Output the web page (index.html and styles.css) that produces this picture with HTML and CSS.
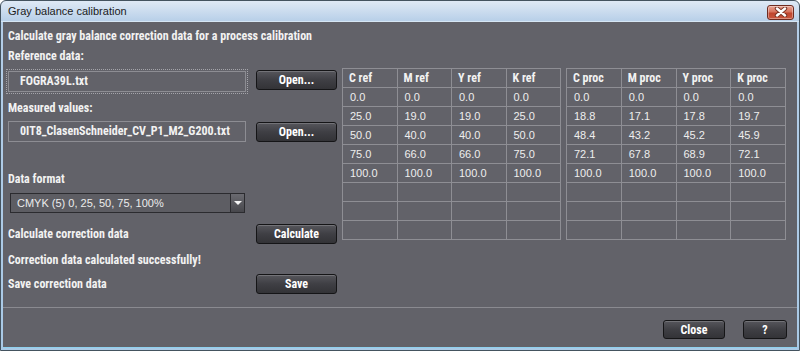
FILE: index.html
```html
<!DOCTYPE html>
<html lang="en">
<head>
  <meta charset="UTF-8" />
  <title>Gray balance calibration</title>
  <link rel="stylesheet" href="styles.css">
</head>
<body>
  <div class="window">
    <div class="titlebar">
      <span class="title">Gray balance calibration</span>
      <button class="close-x" title="Close">
        <svg width="14" height="10" viewBox="0 0 14 10">
          <path d="M3 1.5 L11 8.5 M11 1.5 L3 8.5" stroke="#7a3426" stroke-width="4.4" stroke-linecap="round"/>
          <path d="M3 1.5 L11 8.5 M11 1.5 L3 8.5" stroke="#ffffff" stroke-width="2.4" stroke-linecap="round"/>
        </svg>
      </button>
    </div>

    <div class="client">
      <div class="content">
        <div class="left">
          <p class="intro">Calculate gray balance correction data for a process calibration</p>
          <p class="label label-ref">Reference data:</p>
          <div class="file-row row-ref">
            <div class="field focused">FOGRA39L.txt</div>
            <button class="btn btn-open">Open...</button>
          </div>
          <p class="label label-meas">Measured values:</p>
          <div class="file-row row-meas">
            <div class="field">0IT8_ClasenSchneider_CV_P1_M2_G200.txt</div>
            <button class="btn btn-open">Open...</button>
          </div>
          <p class="label label-format">Data format</p>
          <div class="select">
            <span class="select-text">CMYK (5) 0, 25, 50, 75, 100%</span>
            <span class="select-arrow"></span>
          </div>
          <div class="action-row row-calc">
            <span>Calculate correction data</span>
            <button class="btn btn-action">Calculate</button>
          </div>
          <p class="label status">Correction data calculated successfully!</p>
          <div class="action-row row-save">
            <span>Save correction data</span>
            <button class="btn btn-action">Save</button>
          </div>
        </div>

        <div class="tables">
          <table class="grid grid-ref">
            <tr><th>C ref</th><th>M ref</th><th>Y ref</th><th>K ref</th></tr>
            <tr><td>0.0</td><td>0.0</td><td>0.0</td><td>0.0</td></tr>
            <tr><td>25.0</td><td>19.0</td><td>19.0</td><td>25.0</td></tr>
            <tr><td>50.0</td><td>40.0</td><td>40.0</td><td>50.0</td></tr>
            <tr><td>75.0</td><td>66.0</td><td>66.0</td><td>75.0</td></tr>
            <tr><td>100.0</td><td>100.0</td><td>100.0</td><td>100.0</td></tr>
            <tr><td></td><td></td><td></td><td></td></tr>
            <tr><td></td><td></td><td></td><td></td></tr>
            <tr><td></td><td></td><td></td><td></td></tr>
          </table>
          <table class="grid grid-proc">
            <tr><th>C proc</th><th>M proc</th><th>Y proc</th><th>K proc</th></tr>
            <tr><td>0.0</td><td>0.0</td><td>0.0</td><td>0.0</td></tr>
            <tr><td>18.8</td><td>17.1</td><td>17.8</td><td>19.7</td></tr>
            <tr><td>48.4</td><td>43.2</td><td>45.2</td><td>45.9</td></tr>
            <tr><td>72.1</td><td>67.8</td><td>68.9</td><td>72.1</td></tr>
            <tr><td>100.0</td><td>100.0</td><td>100.0</td><td>100.0</td></tr>
            <tr><td></td><td></td><td></td><td></td></tr>
            <tr><td></td><td></td><td></td><td></td></tr>
            <tr><td></td><td></td><td></td><td></td></tr>
          </table>
        </div>
      </div>

      <div class="footer">
        <button class="btn btn-close">Close</button>
        <button class="btn btn-help">?</button>
      </div>
    </div>
  </div>
</body>
</html>
```

FILE: styles.css
```css
* {
  margin: 0;
  padding: 0;
  box-sizing: border-box;
}

html, body {
  width: 800px;
  height: 351px;
  overflow: hidden;
  background: #ffffff;
}

.window {
  width: 800px;
  height: 351px;
  border: 1px solid #44535f;
  border-radius: 6px 6px 0 0;
  background: linear-gradient(to bottom, #dfe9f5 0, #b4cde7 22px, #a9c9e6 100%);
  display: flex;
  flex-direction: column;
}

/* title bar */
.titlebar {
  height: 21px;
  display: flex;
  align-items: center;
  justify-content: space-between;
  padding: 0 5px 0 7px;
  border-bottom: 1px solid #d6e6f4;
}

.title {
  font-family: "Liberation Sans", Arial, sans-serif;
  font-size: 11px;
  color: #1b1b1b;
}

.close-x {
  width: 27px;
  height: 15px;
  margin-top: 2px;
  border: 1px solid #6e2b20;
  border-radius: 3px;
  background: linear-gradient(to bottom, #e9a595 0, #d7735d 45%, #c0452e 55%, #c9573e 100%);
  box-shadow: inset 0 0 0 1px rgba(255, 255, 255, 0.35);
  display: flex;
  align-items: center;
  justify-content: center;
}

/* client area */
.client {
  flex: 1;
  margin: 0 2px 2px 2px;
  background: #626269;
  border-bottom: 1px solid #8fd0ee;
  color: #f2f2f2;
  font-family: "Liberation Sans Narrow", "Roboto Condensed", "DejaVu Sans Condensed", "Liberation Sans", sans-serif;
  font-size: 12px;
  font-weight: bold;
  display: flex;
  flex-direction: column;
}

.content {
  display: flex;
  padding: 7px 5px 12px 5px;
}

.left {
  width: 329px;
  margin-right: 5px;
  display: flex;
  flex-direction: column;
}

.intro,
.label {
  height: 14px;
  line-height: 14px;
  white-space: nowrap;
}

.label-ref {
  margin-top: 6px;
}

.label-meas {
  margin-top: 9px;
}

.label-format {
  margin-top: 30px;
}

.status {
  margin-top: 8px;
}

.file-row {
  display: flex;
  align-items: flex-start;
  justify-content: space-between;
}

.row-ref {
  margin-top: 6px;
}

.row-ref .field {
  margin-top: 2px;
}

.row-meas {
  margin-top: 6px;
}

.file-row .btn {
  margin-top: 1px;
}

.field {
  width: 238px;
  height: 21px;
  line-height: 19px;
  padding-left: 11px;
  border: 1px solid #8d8d93;
  white-space: nowrap;
  overflow: hidden;
}

.field.focused {
  outline: 1px dotted #a4a4aa;
  outline-offset: 1px;
}

.btn {
  font-family: inherit;
  font-weight: bold;
  font-size: 12px;
  color: #ffffff;
  border: 1px solid #151517;
  border-radius: 3px;
  background: linear-gradient(to bottom, #56565c 0, #3f3f44 50%, #333337 100%);
  box-shadow: inset 0 1px 0 rgba(255, 255, 255, 0.18);
  cursor: pointer;
}

.btn-open,
.btn-action {
  width: 81px;
  height: 20px;
}

.select {
  width: 235px;
  height: 20px;
  margin: 7px 0 0 2px;
  border: 1px solid #2b2b2f;
  background: #5d5d63;
  display: flex;
  align-items: center;
}

.select-text {
  flex: 1;
  padding-left: 6px;
  font-family: "Liberation Sans", Arial, sans-serif;
  font-weight: normal;
  font-size: 11px;
  color: #ececec;
}

.select-arrow {
  width: 14px;
  height: 18px;
  border-left: 1px solid #2b2b2f;
  background: linear-gradient(to bottom, #6a6a70, #47474c);
  position: relative;
}

.select-arrow::after {
  content: "";
  position: absolute;
  left: 3px;
  top: 7px;
  border-left: 4px solid transparent;
  border-right: 4px solid transparent;
  border-top: 4px solid #f4f4f4;
}

.action-row {
  height: 22px;
  display: flex;
  align-items: center;
  justify-content: space-between;
  white-space: nowrap;
}

.row-calc {
  margin-top: 10px;
}

.row-save {
  margin-top: 6px;
}

/* data grids */
.tables {
  display: flex;
  gap: 5px;
  margin-top: 39px;
  align-items: flex-start;
}

.grid {
  border-collapse: collapse;
  table-layout: fixed;
}

.grid-ref {
  width: 219px;
}

.grid-proc {
  width: 220px;
}

.grid th,
.grid td {
  border: 1px solid #8e8e94;
  height: 19px;
  text-align: left;
  white-space: nowrap;
  overflow: hidden;
}

.grid th {
  padding-left: 6px;
  font-size: 12px;
}

.grid td {
  padding-left: 7px;
  font-family: "Liberation Sans", Arial, sans-serif;
  font-weight: normal;
  font-size: 11px;
  color: #eeeeee;
}

/* footer */
.footer {
  flex: 1;
  border-top: 1px solid #8a8a90;
  display: flex;
  justify-content: flex-end;
  align-items: flex-start;
  gap: 18px;
  padding: 12px 10px 0 0;
}

.btn-close {
  width: 62px;
  height: 19px;
}

.btn-help {
  width: 44px;
  height: 19px;
}
```
